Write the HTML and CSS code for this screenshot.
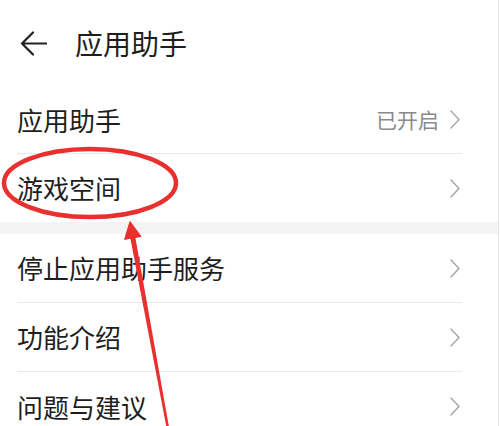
FILE: index.html
```html
<!DOCTYPE html>
<html lang="zh-CN">
<head>
<meta charset="utf-8">
<title>应用助手</title>
<link rel="stylesheet" href="styles.css">
</head>
<body>
<div class="page">
  <header class="header">
    <svg class="back" width="27" height="25" viewBox="0 0 27 25" aria-hidden="true">
      <path d="M13 1.5 L2 12.5 L13 23.5 M2 12.5 H27" fill="none" stroke="#222" stroke-width="2.2" stroke-linecap="round" stroke-linejoin="round"/>
    </svg>
    <h1 class="title">应用助手</h1>
  </header>

  <section class="group">
    <div class="row">
      <span class="label">应用助手</span>
      <span class="meta">
        <span class="value">已开启</span>
        <svg class="chev" width="10" height="19" viewBox="0 0 10 19"><polyline points="1,1 9,9.5 1,18" fill="none" stroke="#a8a8a8" stroke-width="1.5" stroke-linejoin="round" stroke-linecap="round"/></svg>
      </span>
    </div>
    <div class="row">
      <span class="label">游戏空间</span>
      <span class="meta">
        <svg class="chev" width="10" height="19" viewBox="0 0 10 19"><polyline points="1,1 9,9.5 1,18" fill="none" stroke="#a8a8a8" stroke-width="1.5" stroke-linejoin="round" stroke-linecap="round"/></svg>
      </span>
    </div>
  </section>

  <div class="band"></div>

  <section class="group group-b">
    <div class="row">
      <span class="label">停止应用助手服务</span>
      <span class="meta">
        <svg class="chev" width="10" height="19" viewBox="0 0 10 19"><polyline points="1,1 9,9.5 1,18" fill="none" stroke="#a8a8a8" stroke-width="1.5" stroke-linejoin="round" stroke-linecap="round"/></svg>
      </span>
    </div>
    <div class="row">
      <span class="label">功能介绍</span>
      <span class="meta">
        <svg class="chev" width="10" height="19" viewBox="0 0 10 19"><polyline points="1,1 9,9.5 1,18" fill="none" stroke="#a8a8a8" stroke-width="1.5" stroke-linejoin="round" stroke-linecap="round"/></svg>
      </span>
    </div>
    <div class="row">
      <span class="label">问题与建议</span>
      <span class="meta">
        <svg class="chev" width="10" height="19" viewBox="0 0 10 19"><polyline points="1,1 9,9.5 1,18" fill="none" stroke="#a8a8a8" stroke-width="1.5" stroke-linejoin="round" stroke-linecap="round"/></svg>
      </span>
    </div>
  </section>

  <svg class="annot" width="500" height="426" viewBox="0 0 500 426" aria-hidden="true">
    <ellipse cx="90" cy="183" rx="86" ry="34" fill="none" stroke="#e8302e" stroke-width="4.5"/>
    <polygon points="130,236.6 135,235.6 168.8,426 166.2,426" fill="#e8302e"/>
    <polygon points="130,221.5 141,236.4 124.6,239.4" fill="#e8302e" stroke="#e8302e" stroke-width="1" stroke-linejoin="round"/>
  </svg>
</div>
</body>
</html>
```

FILE: styles.css
```css
html, body {
  margin: 0;
  padding: 0;
  background: #ffffff;
}

body {
  font-family: "Noto Sans CJK SC", "Noto Sans", sans-serif;
  color: #1e1e1e;
}

.page {
  position: relative;
  width: 499px;
  height: 426px;
  overflow: hidden;
  border-right: 1px solid #e6e6e6;
  box-sizing: border-box;
}

.header {
  height: 86px;
  display: flex;
  align-items: center;
  padding-left: 20px;
  box-sizing: border-box;
}

.back {
  display: block;
  flex: none;
}

.title {
  margin: 0 0 0 28px;
  font-size: 28px;
  font-weight: 400;
  line-height: 1;
  color: #1e1e1e;
}

.group {
  margin: 0 36px 0 17px;
}

.row {
  height: 68px;
  display: flex;
  align-items: center;
  justify-content: space-between;
  border-bottom: 1px solid #e9e9e9;
  box-sizing: border-box;
}

.group > .row:last-child {
  border-bottom: none;
}

.group-b .row {
  height: 69px;
}

.label {
  font-size: 26px;
  line-height: 1;
  color: #1e1e1e;
}

.meta {
  display: flex;
  align-items: center;
  gap: 11px;
  padding-right: 2px;
}

.value {
  font-size: 21px;
  line-height: 1;
  color: #8a8a8a;
}

.chev {
  display: block;
}

.band {
  height: 12px;
  background: #f3f3f3;
}

.annot {
  position: absolute;
  left: 0;
  top: 0;
  pointer-events: none;
}
```
